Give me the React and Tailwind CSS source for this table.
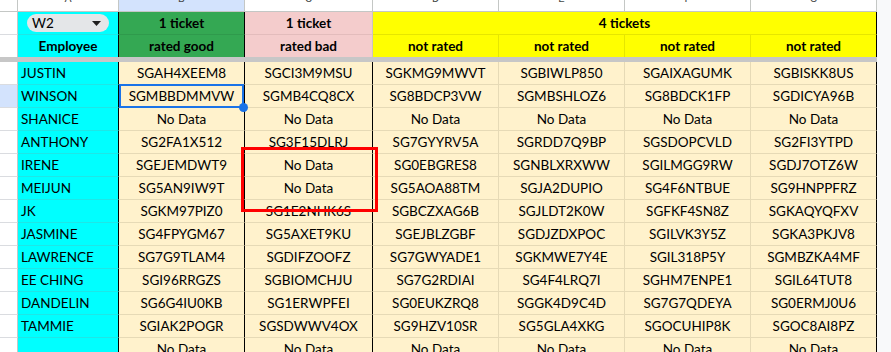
import React from 'react';

const rows = [
  ['JUSTIN', 'SGAH4XEEM8', 'SGCI3M9MSU', 'SGKMG9MWVT', 'SGBIWLP850', 'SGAIXAGUMK', 'SGBISKK8US'],
  ['WINSON', 'SGMBBDMMVW', 'SGMB4CQ8CX', 'SG8BDCP3VW', 'SGMBSHLOZ6', 'SG8BDCK1FP', 'SGDICYA96B'],
  ['SHANICE', 'No Data', 'No Data', 'No Data', 'No Data', 'No Data', 'No Data'],
  ['ANTHONY', 'SG2FA1X512', 'SG3F15DLRJ', 'SG7GYYRV5A', 'SGRDD7Q9BP', 'SGSDOPCVLD', 'SG2FI3YTPD'],
  ['IRENE', 'SGEJEMDWT9', 'No Data', 'SG0EBGRES8', 'SGNBLXRXWW', 'SGILMGG9RW', 'SGDJ7OTZ6W'],
  ['MEIJUN', 'SG5AN9IW9T', 'No Data', 'SG5AOA88TM', 'SGJA2DUPIO', 'SG4F6NTBUE', 'SG9HNPPFRZ'],
  ['JK', 'SGKM97PIZ0', 'SG1E2NHK6S', 'SGBCZXAG6B', 'SGJLDT2K0W', 'SGFKF4SN8Z', 'SGKAQYQFXV'],
  ['JASMINE', 'SG4FPYGM67', 'SG5AXET9KU', 'SGEJBLZGBF', 'SGDJZDXPOC', 'SGILVK3Y5Z', 'SGKA3PKJV8'],
  ['LAWRENCE', 'SG7G9TLAM4', 'SGDIFZOOFZ', 'SG7GWYADE1', 'SGKMWE7Y4E', 'SGIL318P5Y', 'SGMBZKA4MF'],
  ['EE CHING', 'SGI96RRGZS', 'SGBIOMCHJU', 'SG7G2RDIAI', 'SG4F4LRQ7I', 'SGHM7ENPE1', 'SGIL64TUT8'],
  ['DANDELIN', 'SG6G4IU0KB', 'SG1ERWPFEI', 'SG0EUKZRQ8', 'SGGK4D9C4D', 'SG7G7QDEYA', 'SG0ERMJ0U6'],
  ['TAMMIE', 'SGIAK2POGR', 'SGSDWWV4OX', 'SG9HZV10SR', 'SG5GLA4XKG', 'SGOCUHIP8K', 'SGOC8AI8PZ'],
  ['', 'No Data', 'No Data', 'No Data', 'No Data', 'No Data', 'No Data'],
];

// width + right border colour for the ticket columns B..G
const dataCols = [
  'w-[126px] border-r-black',
  'w-[128px] border-r-black',
  'w-[126px] border-r-[#e6dab6]',
  'w-[126px] border-r-[#e6dab6]',
  'w-[126px] border-r-[#e6dab6]',
  'w-[126px] border-r-black',
];

const letters = [
  ['B', 'w-[126px] bg-[#d3e3fd]'],
  ['C', 'w-[128px] bg-white'],
  ['D', 'w-[126px] bg-white'],
  ['E', 'w-[126px] bg-white'],
  ['F', 'w-[126px] bg-white'],
  ['G', 'w-[126px] bg-white'],
];

const ColLetter = ({ label, className }) => (
  <div className={`${className} h-full box-border border-r border-r-[#c4c7c5] flex items-end justify-center overflow-hidden pb-[7px]`}>
    <span className="text-[11px] leading-[10px] text-[#444746] font-['Roboto',sans-serif]">{label}</span>
  </div>
);

const DataRow = ({ cells, selected }) => {
  const [name, ...vals] = cells;
  return (
    <div className="flex h-[23px]">
      <div className={`w-[18px] box-border border-b border-r border-b-[#dadce0] border-r-[#c4c7c5] ${selected ? 'bg-[#d3e3fd]' : 'bg-white'}`} />
      <div className="w-[101px] box-border border-b border-r border-b-[#1fe6e6] border-r-black bg-[#00ffff] flex items-center pl-[3px] text-[13.5px]">
        {name}
      </div>
      {vals.map((v, i) => (
        <div
          key={i}
          className={`${dataCols[i]} box-border border-b border-r border-b-[#e6dab6] bg-[#fff2cc] flex items-center justify-center text-[13.5px]`}
        >
          {v}
        </div>
      ))}
    </div>
  );
};

export default function App() {
  return (
    <div className="relative w-[891px] h-[352px] overflow-hidden bg-[#f8f9fa] text-black font-['Lato',sans-serif]">
      <div className="w-[877px]">
        {/* column letters */}
        <div className="flex h-[12px] box-border border-b border-b-[#c4c7c5] bg-white">
          <div className="w-[18px] h-full box-border border-r border-r-[#c4c7c5]" />
          <ColLetter label="A" className="w-[101px] bg-white" />
          {letters.map(([l, c]) => (
            <ColLetter key={l} label={l} className={c} />
          ))}
        </div>

        {/* header row 1 */}
        <div className="flex h-[23px] font-bold text-[13.5px]">
          <div className="w-[18px] bg-white box-border border-b border-r border-b-[#dadce0] border-r-[#c4c7c5]" />
          <div className="w-[101px] bg-[#00ffff] box-border border-b border-r border-b-[#1fe6e6] border-r-black flex items-center justify-center">
            <div className="w-[82px] h-[18px] rounded-full bg-[#e4e6e8] flex items-center justify-between pl-[5px] pr-[8px] font-normal">
              <span>W2</span>
              <svg width="9" height="5" viewBox="0 0 9 5">
                <path d="M0 0h9L4.5 5z" fill="#1f1f1f" />
              </svg>
            </div>
          </div>
          <div className="w-[126px] bg-[#34a853] box-border border-b border-r border-b-[#2f9a4c] border-r-black flex items-center justify-center">
            1 ticket
          </div>
          <div className="w-[128px] bg-[#f4cccc] box-border border-b border-r border-b-[#e3bcbc] border-r-[#cbc3c3] flex items-center justify-center">
            1 ticket
          </div>
          <div className="w-[504px] bg-[#ffff00] box-border border-b border-r border-b-[#e6e600] border-r-black flex items-center justify-center">
            4 tickets
          </div>
        </div>

        {/* header row 2 */}
        <div className="flex h-[22px] font-bold text-[13.5px]">
          <div className="w-[18px] bg-white box-border border-r border-r-[#c4c7c5]" />
          <div className="w-[101px] bg-[#00ffff] box-border border-r border-r-black flex items-center justify-center">
            Employee
          </div>
          <div className="w-[126px] bg-[#34a853] box-border border-r border-r-black flex items-center justify-center">
            rated good
          </div>
          <div className="w-[128px] bg-[#f4cccc] box-border border-r border-r-[#cbc3c3] flex items-center justify-center">
            rated bad
          </div>
          <div className="w-[126px] bg-[#ffff00] box-border border-r border-r-[#e6e600] flex items-center justify-center">
            not rated
          </div>
          <div className="w-[126px] bg-[#ffff00] box-border border-r border-r-[#e6e600] flex items-center justify-center">
            not rated
          </div>
          <div className="w-[126px] bg-[#ffff00] box-border border-r border-r-[#e6e600] flex items-center justify-center">
            not rated
          </div>
          <div className="w-[126px] bg-[#ffff00] box-border border-r border-r-black flex items-center justify-center">
            not rated
          </div>
        </div>

        {/* frozen divider */}
        <div className="h-[5px] bg-[#c7c7c7]" />

        {rows.map((r, i) => (
          <DataRow key={i} cells={r} selected={r[0] === 'WINSON'} />
        ))}
      </div>

      {/* selected cell */}
      <div className="absolute left-[119px] top-[84px] w-[125px] h-[24px] border-2 border-[#1a73e8]" />
      <div className="absolute left-[239px] top-[103px] w-[9px] h-[9px] rounded-full bg-[#1a73e8]" />

      {/* red highlight box */}
      <div className="absolute left-[241px] top-[147px] w-[137px] h-[65px] border-[3px] border-[#ff0000]" />
    </div>
  );
}
